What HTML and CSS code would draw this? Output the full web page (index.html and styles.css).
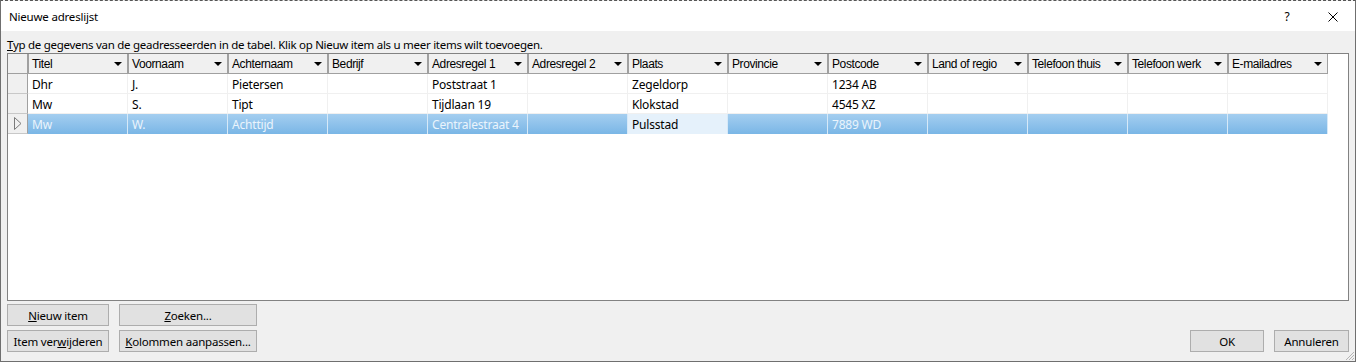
FILE: index.html
```html
<!DOCTYPE html>
<html lang="nl">
<head>
  <meta charset="UTF-8" />
  <title>Nieuwe adreslijst</title>
  <link rel="stylesheet" href="styles.css">
</head>
<body>
  <div class="window">
    <div class="titlebar">
      <span class="title">Nieuwe adreslijst</span>
      <span class="help">?</span>
      <span class="close">
        <svg width="10" height="10" viewBox="0 0 10 10"><path d="M0.5 0.5 L9.5 9.5 M9.5 0.5 L0.5 9.5" stroke="#000" stroke-width="1" fill="none"/></svg>
      </span>
    </div>

    <div class="content">
      <div class="hint"><u>T</u>yp de gegevens van de geadresseerden in de tabel. Klik op Nieuw item als u meer items wilt toevoegen.</div>

      <div class="grid">
        <div class="row head">
          <div class="rowhead"></div>
          <div class="col"><span>Titel</span><i></i></div>
          <div class="col"><span>Voornaam</span><i></i></div>
          <div class="col"><span>Achternaam</span><i></i></div>
          <div class="col"><span>Bedrijf</span><i></i></div>
          <div class="col"><span>Adresregel 1</span><i></i></div>
          <div class="col"><span>Adresregel 2</span><i></i></div>
          <div class="col"><span>Plaats</span><i></i></div>
          <div class="col"><span>Provincie</span><i></i></div>
          <div class="col"><span>Postcode</span><i></i></div>
          <div class="col"><span>Land of regio</span><i></i></div>
          <div class="col"><span>Telefoon thuis</span><i></i></div>
          <div class="col"><span>Telefoon werk</span><i></i></div>
          <div class="col"><span>E-mailadres</span><i></i></div>
        </div>

        <div class="row">
          <div class="rowhead"></div>
          <div class="cell">Dhr</div>
          <div class="cell">J.</div>
          <div class="cell">Pietersen</div>
          <div class="cell"></div>
          <div class="cell">Poststraat 1</div>
          <div class="cell"></div>
          <div class="cell">Zegeldorp</div>
          <div class="cell"></div>
          <div class="cell">1234 AB</div>
          <div class="cell"></div>
          <div class="cell"></div>
          <div class="cell"></div>
          <div class="cell"></div>
        </div>

        <div class="row">
          <div class="rowhead"></div>
          <div class="cell">Mw</div>
          <div class="cell">S.</div>
          <div class="cell">Tipt</div>
          <div class="cell"></div>
          <div class="cell">Tijdlaan 19</div>
          <div class="cell"></div>
          <div class="cell">Klokstad</div>
          <div class="cell"></div>
          <div class="cell">4545 XZ</div>
          <div class="cell"></div>
          <div class="cell"></div>
          <div class="cell"></div>
          <div class="cell"></div>
        </div>

        <div class="row selected">
          <div class="rowhead">
            <svg width="9" height="13" viewBox="0 0 9 13"><path d="M1.5 0.5 L8 6.5 L1.5 12.5 Z" stroke="#7a7a7a" stroke-width="1" fill="none"/></svg>
          </div>
          <div class="cell">Mw</div>
          <div class="cell">W.</div>
          <div class="cell">Achttijd</div>
          <div class="cell"></div>
          <div class="cell">Centralestraat 4</div>
          <div class="cell"></div>
          <div class="cell current">Pulsstad</div>
          <div class="cell"></div>
          <div class="cell">7889 WD</div>
          <div class="cell"></div>
          <div class="cell"></div>
          <div class="cell"></div>
          <div class="cell"></div>
        </div>
      </div>

      <div class="footer">
        <button class="btn"><u>N</u>ieuw item</button>
        <button class="btn"><u>Z</u>oeken...</button>
        <button class="btn row2">Item ver<u>w</u>ijderen</button>
        <button class="btn row2"><u>K</u>olommen aanpassen...</button>
        <button class="btn ok">OK</button>
        <button class="btn cancel">Annuleren</button>
      </div>
    </div>

    <svg class="grip" width="12" height="12" viewBox="0 0 12 12">
      <path d="M11 3 L3 11 M11 6 L6 11 M11 9 L9 11" stroke="#b4b4b4" stroke-width="1" fill="none"/>
    </svg>
  </div>
</body>
</html>
```

FILE: styles.css
```css
/* Page */
body {
  margin: 0;
  background: #ffffff;
  font-family: "Noto Sans", "Open Sans", sans-serif;
  font-size: 11.5px;
  letter-spacing: -0.2px;
  color: #000;
}

/* Dialog window */
.window {
  position: relative;
  box-sizing: border-box;
  width: 1356px;
  height: 362px;
  display: flex;
  flex-direction: column;
  border: 1px solid #6f6f6f;
  border-top: 1px dashed #555;
  background: #f0f0f0;
}

.titlebar {
  height: 30px;
  flex: none;
  display: flex;
  align-items: center;
  background: #fff;
  padding-left: 8px;
}

.title {
  flex: 1;
}

.help {
  width: 12px;
  text-align: center;
  margin-right: 35px;
  font-size: 12px;
}

.close {
  display: flex;
  margin-right: 17px;
  margin-top: 1px;
}

/* Content area */
.content {
  flex: 1;
  display: flex;
  flex-direction: column;
  padding: 5px 6px 0 6px;
}

.hint {
  height: 17px;
  line-height: 17px;
  white-space: nowrap;
  letter-spacing: -0.28px;
}

/* Data grid */
.grid {
  box-sizing: border-box;
  height: 248px;
  border: 1px solid #828282;
  background: #fff;
}

.row {
  display: grid;
  grid-template-columns: 20px repeat(13, 100px);
  height: 20px;
}

.row > div {
  box-sizing: border-box;
  height: 20px;
}

.rowhead {
  background: #f0f0f0;
  border-right: 1px solid #a0a0a0;
  border-bottom: 1px solid #c8c8c8;
  display: flex;
  align-items: center;
  padding-left: 5px;
}

.head .rowhead {
  border-bottom: 1px solid #a0a0a0;
}

.col {
  display: flex;
  align-items: center;
  justify-content: space-between;
  background: #f0f0f0;
  border-left: 1px solid #a0a0a0;
  border-right: 1px solid #a0a0a0;
  border-bottom: 1px solid #a0a0a0;
  padding: 1px 5px 0 3px;
  font-family: "Liberation Sans", Arial, sans-serif;
  font-size: 12px;
  letter-spacing: -0.4px;
  white-space: nowrap;
}

.col:first-of-type {
  border-left: none;
}

.col i {
  width: 0;
  height: 0;
  border-left: 4px solid transparent;
  border-right: 4px solid transparent;
  border-top: 4px solid #000;
}

.cell {
  border-right: 1px solid #f0f0f0;
  border-bottom: 1px solid #f0f0f0;
  padding: 2px 0 0 4px;
  line-height: 17px;
  font-size: 12px;
  white-space: nowrap;
  overflow: hidden;
}

.selected .cell {
  background: linear-gradient(#a4cef0, #7ab6e6);
  color: #eaf4fc;
  border-right: 1px solid #d6e9f8;
  border-bottom: none;
}

.selected .cell.current {
  background: #e5f1fb;
  color: #000;
}

/* Buttons */
.footer {
  display: grid;
  grid-template-columns: 102px 138px 1fr 74px 75px;
  grid-template-rows: 22px 22px;
  column-gap: 10px;
  row-gap: 4px;
  margin-top: 3px;
}

.btn {
  box-sizing: border-box;
  height: 22px;
  margin: 0;
  padding: 0;
  border: 1px solid #adadad;
  background: #e1e1e1;
  font-family: "Noto Sans", "Open Sans", sans-serif;
  font-size: 11.5px;
  letter-spacing: -0.2px;
  color: #000;
  white-space: nowrap;
}

.btn.row2 {
  grid-row: 2;
}

.btn.ok {
  grid-row: 2;
  grid-column: 4;
}

.btn.cancel {
  grid-row: 2;
  grid-column: 5;
}

.grip {
  position: absolute;
  right: 0;
  bottom: 0;
}
```
